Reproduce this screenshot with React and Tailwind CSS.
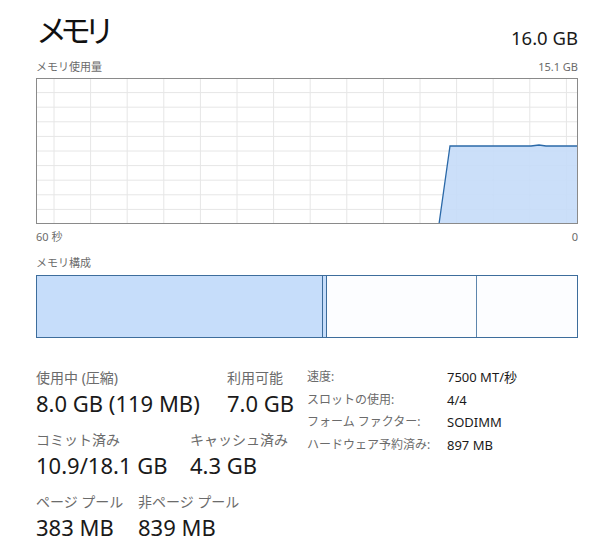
import React from 'react';

const font = { fontFamily: '"Noto Sans", "Noto Sans CJK JP", sans-serif' };

const W = 542;
const H = 146;

// vertical grid lines (x offsets inside the chart box)
const vLines = [];
for (let x = 18; x < W; x += 36.6) vLines.push(x);
const hLines = [];
for (let i = 1; i < 10; i++) hLines.push(i * 14.6);

const UsageChart = () => (
  <svg width={W} height={H} className="block">
    <rect x="0" y="0" width={W} height={H} fill="#ffffff" />
    {vLines.map((x) => (
      <line key={'v' + x} x1={x} y1="0" x2={x} y2={H} stroke="#e6e6e6" strokeWidth="1" />
    ))}
    {hLines.map((y) => (
      <line key={'h' + y} x1="0" y1={y} x2={W} y2={y} stroke="#e6e6e6" strokeWidth="1" />
    ))}
    <polygon
      points={`403,${H} 414,68 495,68 503,67 510,68 ${W},68 ${W},${H}`}
      fill="#c5dcf8"
      fillOpacity="0.9"
    />
    <polyline
      points={`403,${H} 414,68 495,68 503,67 510,68 ${W},68`}
      fill="none"
      stroke="#2b69a8"
      strokeWidth="1.3"
    />
    <rect x="0.5" y="0.5" width={W - 1} height={H - 1} fill="none" stroke="#8a8a8a" strokeWidth="1" />
  </svg>
);

const Stat = ({ label, value, w = '' }) => (
  <div className={`flex flex-col whitespace-nowrap ${w}`}>
    <span className="text-[14px] leading-[20px] text-[#6b6b6b]">{label}</span>
    <span className="text-[22px] leading-[30px] text-[#1a1a1a]">{value}</span>
  </div>
);

const details = [
  ['速度:', '7500 MT/秒'],
  ['スロットの使用:', '4/4'],
  ['フォーム ファクター:', 'SODIMM'],
  ['ハードウェア予約済み:', '897 MB'],
];

export default function App() {
  return (
    <div className="w-[600px] h-[551px] bg-white pl-[36px] pr-[22px] pt-[10px]" style={font}>
      <div className="flex justify-between items-end">
        <h1 className="text-[31px] leading-[40px] tracking-[-7px] text-[#111]">メモリ</h1>
        <span className="text-[18.5px] leading-[26px] text-[#1a1a1a] -mb-[1px]">16.0 GB</span>
      </div>

      <div className="flex justify-between text-[11px] leading-[14px] text-[#6b6b6b] mt-[10px]">
        <span>メモリ使用量</span>
        <span>15.1 GB</span>
      </div>
      <div className="mt-[4px]">
        <UsageChart />
      </div>
      <div className="flex justify-between text-[11px] leading-[14px] text-[#6b6b6b] mt-[6px]">
        <span>60 秒</span>
        <span>0</span>
      </div>

      <div className="text-[11px] leading-[14px] text-[#6b6b6b] mt-[12px]">メモリ構成</div>
      <div className="flex h-[63px] mt-[5px] border border-[#3d6d9c]">
        <div className="w-[286px] bg-[#c6ddfa] border-r border-[#3d6d9c]" />
        <div className="w-[4px] bg-[#c6ddfa] border-r border-[#3d6d9c]" />
        <div className="w-[150px] bg-[#fcfdff] border-r border-[#5d86ad]" />
        <div className="flex-1 bg-[#fcfdff]" />
      </div>

      <div className="flex items-start mt-[30px]">
        <div className="w-[271px] flex flex-col gap-[12px]">
          <div className="flex gap-[25px]">
            <Stat label="使用中 (圧縮)" value="8.0 GB (119 MB)" w="w-[166px]" />
            <Stat label="利用可能" value="7.0 GB" />
          </div>
          <div className="flex gap-[25px]">
            <Stat label="コミット済み" value="10.9/18.1 GB" w="w-[129px]" />
            <Stat label="キャッシュ済み" value="4.3 GB" />
          </div>
          <div className="flex gap-[25px]">
            <Stat label="ページ プール" value="383 MB" w="w-[77px]" />
            <Stat label="非ページ プール" value="839 MB" />
          </div>
        </div>
        <div className="grid grid-cols-[140px_auto] auto-rows-[22.7px] leading-[22.7px] -mt-[2px]">
          {details.map(([k, v]) => (
            <React.Fragment key={k}>
              <span className="text-[12px] text-[#6b6b6b]">{k}</span>
              <span className="text-[13px] text-[#1a1a1a]">{v}</span>
            </React.Fragment>
          ))}
        </div>
      </div>
    </div>
  );
}
